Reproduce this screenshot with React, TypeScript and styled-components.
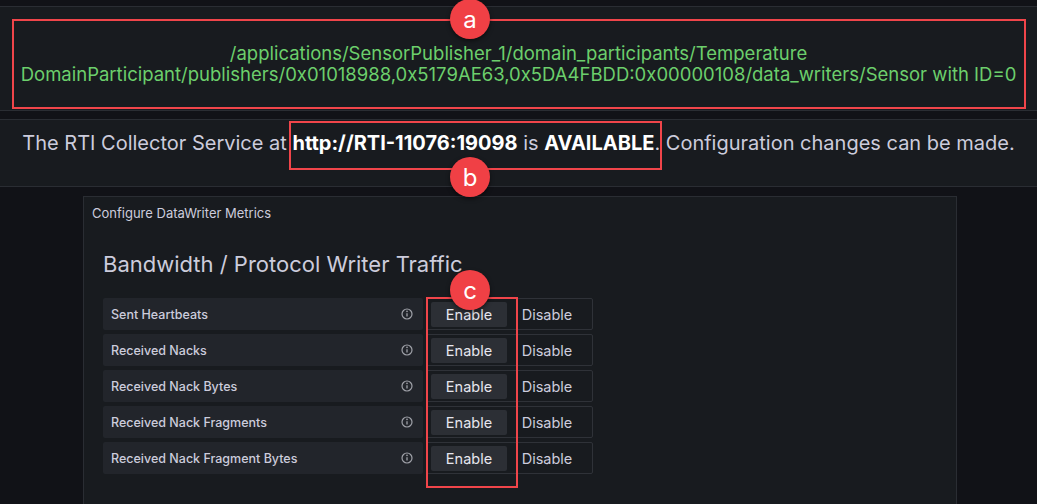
import React from 'react';
import styled, { createGlobalStyle } from 'styled-components';

const Global = createGlobalStyle`
  html, body { margin: 0; background: #111217; }
  body { font-family: Inter, "Noto Sans", sans-serif; color: #ccccdc; }
`;

const Page = styled.div`
  position: relative;
  width: 1037px;
  height: 504px;
  overflow: hidden;
  background: #111217;
`;

const Panel = styled.div<{ h: number; top: number; pad: number }>`
  margin-top: ${(p) => p.top}px;
  height: ${(p) => p.h}px;
  box-sizing: border-box;
  padding-top: ${(p) => p.pad}px;
  background: #181b1f;
  border-top: 1px solid #2a2d33;
  border-bottom: 1px solid #2a2d33;
  text-align: center;
`;

const PathText = styled.div`
  color: #6ccf6c;
  font-size: 18.5px;
  line-height: 21px;
  white-space: nowrap;
`;

const Status = styled.div`
  font-size: 20px;
  line-height: 24px;
  color: #ccccdc;
  white-space: nowrap;
  b { color: #fff; font-weight: 700; }
`;

const Config = styled.div`
  margin: 9px 0 0 83px;
  width: 872px;
  height: 320px;
  background: #181b1f;
  border: 1px solid #2a2d33;
`;

const ConfigTitle = styled.div`
  font-size: 13px;
  padding: 8px 0 0 8px;
  color: #ccccdc;
`;

const Heading = styled.div`
  font-size: 22px;
  margin: 30px 0 0 19px;
  color: #ccccdc;
`;

const Rows = styled.div`
  margin: 21px 0 0 19px;
  display: flex;
  flex-direction: column;
  gap: 4px;
`;

const Row = styled.div`
  display: flex;
  gap: 3px;
  height: 32px;
`;

const Label = styled.div`
  width: 320px;
  background: #22252b;
  border-radius: 2px;
  display: flex;
  align-items: center;
  justify-content: space-between;
  padding: 0 10px 0 8px;
  box-sizing: border-box;
  font-size: 12.5px;
  font-weight: 500;
`;

const Group = styled.div`
  width: 167px;
  border: 1px solid #2f3238;
  border-radius: 2px;
  display: flex;
  align-items: center;
  padding: 3px 4px;
  box-sizing: border-box;
`;

const Btn = styled.div<{ active?: boolean }>`
  width: ${(p) => (p.active ? 76 : 80)}px;
  height: 25px;
  display: flex;
  align-items: center;
  justify-content: center;
  font-size: 14.5px;
  color: ${(p) => (p.active ? '#e6e6ee' : '#ccccdc')};
  background: ${(p) => (p.active ? '#2c2f35' : 'transparent')};
  border-radius: 2px;
`;

const Box = styled.div<{ x: number; y: number; w: number; h: number }>`
  position: absolute;
  left: ${(p) => p.x}px;
  top: ${(p) => p.y}px;
  width: ${(p) => p.w}px;
  height: ${(p) => p.h}px;
  border: 2px solid #f0454a;
  box-sizing: border-box;
`;

const Badge = styled.div<{ x: number; y: number }>`
  position: absolute;
  left: ${(p) => p.x - 20}px;
  top: ${(p) => p.y - 20}px;
  width: 40px;
  height: 40px;
  border-radius: 50%;
  background: #f04045;
  color: #fff;
  font-size: 24px;
  display: flex;
  align-items: center;
  justify-content: center;
  box-shadow: 0 2px 4px rgba(0, 0, 0, 0.5);
`;

const Info = () => (
  <svg width="12" height="12" viewBox="0 0 12 12">
    <circle cx="6" cy="6" r="5" fill="none" stroke="#9fa1a8" strokeWidth="1.2" />
    <line x1="6" y1="5.2" x2="6" y2="8.6" stroke="#9fa1a8" strokeWidth="1.3" />
    <circle cx="6" cy="3.4" r="0.8" fill="#9fa1a8" />
  </svg>
);

const metrics = [
  'Sent Heartbeats',
  'Received Nacks',
  'Received Nack Bytes',
  'Received Nack Fragments',
  'Received Nack Fragment Bytes',
];

export default function App() {
  return (
    <Page>
      <Global />
      <Panel top={6} h={105} pad={36}>
        <PathText>
          /applications/SensorPublisher_1/domain_participants/Temperature
          <br />
          DomainParticipant/publishers/0x01018988,0x5179AE63,0x5DA4FBDD:0x00000108/data_writers/Sensor with ID=0
        </PathText>
      </Panel>
      <Panel top={8} h={68} pad={11}>
        <Status>
          The RTI Collector Service at <b>http://RTI-11076:19098</b> is <b>AVAILABLE</b>. Configuration changes can be made.
        </Status>
      </Panel>
      <Config>
        <ConfigTitle>Configure DataWriter Metrics</ConfigTitle>
        <Heading>Bandwidth / Protocol Writer Traffic</Heading>
        <Rows>
          {metrics.map((m) => (
            <Row key={m}>
              <Label>
                {m}
                <Info />
              </Label>
              <Group>
                <Btn active>Enable</Btn>
                <Btn>Disable</Btn>
              </Group>
            </Row>
          ))}
        </Rows>
      </Config>
      <Box x={12} y={19} w={1014} h={90} />
      <Box x={289} y={121} w={373} h={49} />
      <Box x={426} y={297} w={92} h={191} />
      <Badge x={470} y={19}>a</Badge>
      <Badge x={470} y={177}>b</Badge>
      <Badge x={470} y={290}>c</Badge>
    </Page>
  );
}
